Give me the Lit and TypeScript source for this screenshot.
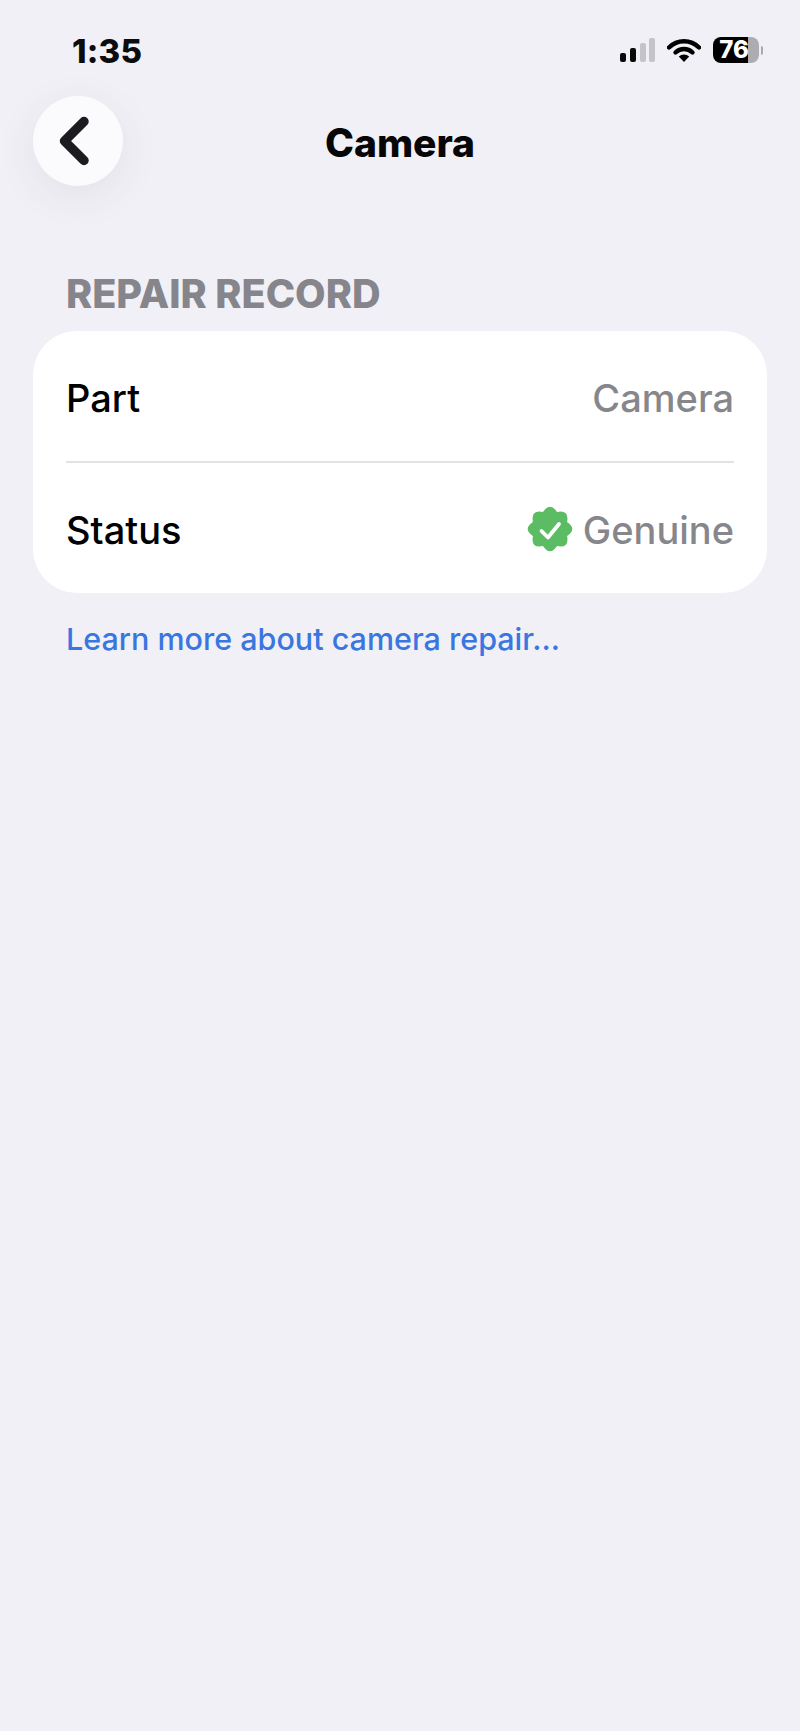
import { LitElement, html, css, svg } from "lit";
import { customElement } from "lit/decorators.js";

function badgePath(cx: number, cy: number, outer: number, inner: number, bumps: number): string {
  const pts: string[] = [];
  const n = bumps * 2;
  for (let i = 0; i < n; i++) {
    const a = (i / n) * Math.PI * 2 - Math.PI / 2;
    const r = i % 2 === 0 ? outer : inner;
    pts.push(`${(cx + Math.cos(a) * r).toFixed(2)} ${(cy + Math.sin(a) * r).toFixed(2)}`);
  }
  let d = "";
  for (let i = 0; i < n; i += 2) {
    const prev = pts[(i + n - 1) % n];
    const cur = pts[i];
    const next = pts[(i + 1) % n];
    d += `${i === 0 ? "M" + prev : ""} Q${cur} ${next} `;
  }
  return d + "Z";
}

@customElement("app-root")
export class AppRoot extends LitElement {
  static styles = css`
    :host {
      display: block;
      width: 800px;
      height: 1731px;
      background: #f0f0f6;
      font-family: Inter, "Noto Sans", sans-serif;
      color: #000;
      overflow: hidden;
    }
    .status {
      display: flex;
      align-items: center;
      justify-content: space-between;
      height: 26px;
      padding: 38px 37px 0 72px;
    }
    .time {
      font-size: 33px;
      font-weight: 800;
      line-height: 26px;
      color: #0c0c0e;
      letter-spacing: 0.2px;
    }
    .indicators {
      display: flex;
      align-items: center;
      margin-top: -2px;
    }
    .signal { display: block; margin-right: 12px; }
    .wifi { display: block; margin-right: 12px; }
    .battery {
      display: flex;
      align-items: center;
      gap: 2px;
    }
    .cell {
      width: 46px;
      height: 26px;
      border-radius: 8px;
      background: linear-gradient(90deg, #000 0 35px, #adadb1 35px);
      color: #fff;
      font-size: 24px;
      font-weight: 800;
      line-height: 26px;
      text-align: center;
      padding-right: 4px;
      box-sizing: border-box;
    }
    .tip {
      width: 2px;
      height: 9px;
      background: #a9a9ad;
      border-radius: 0 2px 2px 0;
    }
    .nav {
      display: flex;
      align-items: center;
      position: relative;
      margin: 32px 33px 0;
      height: 90px;
    }
    .back {
      width: 90px;
      height: 90px;
      border-radius: 50%;
      background: #fbfbfe;
      box-shadow: 0 10px 40px rgba(60, 60, 80, 0.08);
    }
    .back svg { display: block; }
    .title {
      position: absolute;
      left: 0;
      right: 0;
      top: 25px;
      text-align: center;
      font-size: 39px;
      font-weight: 800;
      line-height: 44px;
      color: #060608;
    }
    .section {
      margin: 86px 66px 0;
      font-size: 39.6px;
      font-weight: 800;
      line-height: 44px;
      color: #85858b;
    }
    .card {
      margin: 15px 33px 0;
      height: 262px;
      background: #fff;
      border-radius: 44px;
      padding: 0 33px;
      display: flex;
      flex-direction: column;
    }
    .row {
      flex: 1;
      display: flex;
      align-items: center;
      justify-content: space-between;
      font-size: 38px;
      line-height: 44px;
      font-weight: 500;
      padding-top: 3px;
    }
    .row + .row {
      border-top: 2px solid #e2e2e5;
    }
    .val {
      display: flex;
      align-items: center;
      gap: 10px;
      color: #87878b;
    }
    .val svg { display: block; margin-top: -2px; }
    .link {
      margin: 27px 66px 0;
      font-size: 30.5px;
      line-height: 38px;
      font-weight: 500;
      color: #3a76e0;
    }
  `;

  render() {
    return html`
      <div class="status">
        <div class="time">1:35</div>
        <div class="indicators">
          <svg class="signal" width="35" height="24" viewBox="0 0 35 24">
            <rect x="0" y="15" width="6" height="9" rx="2" fill="#0a0a0a" />
            <rect x="10" y="10" width="6" height="14" rx="2" fill="#0a0a0a" />
            <rect x="20" y="5" width="6" height="19" rx="2" fill="#c3c3c8" />
            <rect x="29" y="0" width="6" height="24" rx="2" fill="#c3c3c8" />
          </svg>
          <svg class="wifi" width="34" height="24" viewBox="0 0 34 24">
            <path d="M2 9.5 A21 21 0 0 1 32 9.5" fill="none" stroke="#000" stroke-width="4.4" stroke-linecap="round" />
            <path d="M8.5 14.5 A12 12 0 0 1 25.5 14.5" fill="none" stroke="#000" stroke-width="4.4" stroke-linecap="round" />
            <path d="M17 24 L11.8 18.6 A7.4 7.4 0 0 1 22.2 18.6 Z" fill="#000" />
          </svg>
          <div class="battery">
            <div class="cell">76</div>
            <div class="tip"></div>
          </div>
        </div>
      </div>
      <div class="nav">
        <div class="title">Camera</div>
        <div class="back">
          <svg width="90" height="90" viewBox="0 0 90 90">
            <path d="M51 25.5 L31.5 45 L51 64.5" fill="none" stroke="#1c1c20" stroke-width="9.5" stroke-linecap="round" stroke-linejoin="round" />
          </svg>
        </div>
      </div>
      <div class="section">REPAIR RECORD</div>
      <div class="card">
        <div class="row">
          <span>Part</span>
          <span class="val">Camera</span>
        </div>
        <div class="row">
          <span>Status</span>
          <span class="val">
            <svg width="46" height="46" viewBox="0 0 46 46">
              ${svg`<path d="${badgePath(23, 23, 27.5, 18.5, 8)}" fill="#5cbc63" />`}
              <path d="M14.5 25 L21 31.5 L32 18" fill="none" stroke="#fff" stroke-width="3.8" stroke-linecap="round" stroke-linejoin="round" />
            </svg>
            Genuine
          </span>
        </div>
      </div>
      <div class="link">Learn more about camera repair...</div>
    `;
  }
}
